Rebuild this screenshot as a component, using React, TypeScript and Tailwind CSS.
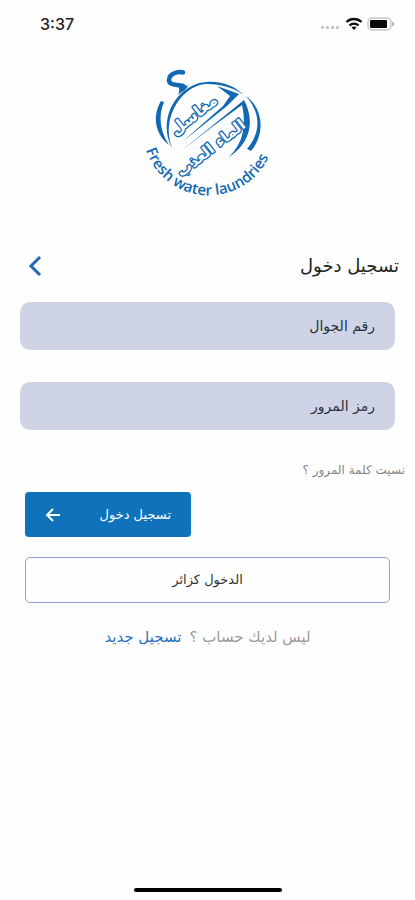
import React from "react";

function Logo() {
  return (
    <svg viewBox="130 60 155 140" className="h-[140px] w-[155px]" role="img" aria-label="Fresh water laundries">
      <defs>
        <path id="motto" d="M146 150 A66 66 0 0 0 274 139" />
      </defs>
      <path
        d="M183 72.500 C177 71 169 74 169 80 C169 86 177 84 183 86"
        fill="none"
        stroke="#1268b3"
        strokeLinecap="round"
        strokeWidth="4.500"
      />
      <g fill="#1268b3">
        <path d="M176 83 L188 86 C187 89 183 91 178 95 C180 91 180 87 176 83 Z" />
        <path d="M244 95 C234 86 222 81 207 82 C180 83 156 116 172 148 C160 116 184 84 207 84 C222 84 234 88 244 95 Z" />
        <path d="M161 101 L164 102 C158 116 160 131 169 145 C155 134 152 116 161 101 Z" />
        <path d="M246 96 C264 109 265 135 251 151 L247 149 C262 131 260 112 246 96 Z" />
        <path d="M217 86 L239 94 L227 106 L182 142 L223 106 L230 96 Z" />
        <path d="M180 152 L244 100 C256 123 249 144 229 157 C242 144 247 128 242 105 L212 127 Z" />
      </g>
      <g
        className="font-['DejaVu_Sans',sans-serif] font-bold"
        fill="#fff"
        stroke="#1268b3"
        strokeWidth="2.6"
        strokeLinejoin="round"
        paintOrder="stroke"
        textAnchor="middle"
        direction="rtl"
      >
        <text transform="translate(197 119) rotate(-38)" fontSize="16">مغاسل</text>
        <text transform="translate(214 152) rotate(-38)" fontSize="15">الماء العذب</text>
      </g>
      <text className="font-['Open_Sans',sans-serif] font-semibold" fill="#1268b3" fontSize="15">
        <textPath href="#motto">Fresh water laundries</textPath>
      </text>
    </svg>
  );
}

function StatusBar() {
  return (
    <header className="flex h-12 items-center justify-between pr-5 pl-10 font-['Inter',sans-serif]">
      <span className="text-base font-medium text-[#222]">3:37</span>
      <div className="flex items-center gap-1">
        <svg viewBox="0 0 20 4" className="mt-2 h-1 w-5" fill="#c4c4c4" aria-hidden="true">
          <rect x="0" y="0" width="3" height="3" rx="1" />
          <rect x="5" y="0" width="3" height="3" rx="1" />
          <rect x="10" y="0" width="3" height="3" rx="1" />
          <rect x="15" y="0" width="3" height="3" rx="1" />
        </svg>
        <svg viewBox="0 0 18 14" className="h-[14px] w-[18px]" fill="none" stroke="#111" strokeWidth="2.4" aria-hidden="true">
          <path d="M1.500 5 C5.500 1 12.500 1 16.500 5" />
          <path d="M4.500 8.500 C7 6 11 6 13.500 8.500" />
          <path d="M6.500 10.500 C8 9.300 10 9.300 11.500 10.500 L9 13 Z" fill="#111" stroke="none" />
        </svg>
        <svg viewBox="0 0 28 14" className="h-[14px] w-7" aria-hidden="true">
          <rect x="1" y="1" width="23" height="12" rx="4" fill="#fff" stroke="#c8c8c8" strokeWidth="1.500" />
          <rect x="3" y="3" width="17" height="8" rx="1" fill="#080808" />
          <path d="M25 4.500 L28 7 L25 9.500 Z" fill="#b5b5b5" />
        </svg>
      </div>
    </header>
  );
}

function Field({ id, label, type }: { id: string; label: string; type: string }) {
  return (
    <input
      id={id}
      type={type}
      dir="rtl"
      aria-label={label}
      placeholder={label}
      className="block h-12 w-full rounded-[10px] bg-[#ced4e5] px-5 text-right text-sm text-[#2c303b] outline-none placeholder:text-[#2c303b] placeholder:opacity-100"
    />
  );
}

export default function App() {
  return (
    <div dir="ltr" className="flex min-h-screen flex-col bg-[#fefefe] font-['DejaVu_Sans',sans-serif]">
      <StatusBar />
      <main className="flex flex-1 flex-col">
        <div className="mt-3 flex justify-center">
          <Logo />
        </div>
        <div className="mt-12 flex h-9 items-center justify-between pr-4 pl-6">
          <button type="button" aria-label="رجوع" className="p-1">
            <svg viewBox="0 0 14 22" className="h-[22px] w-[14px]" fill="none" stroke="#2169b4" strokeWidth="3" aria-hidden="true">
              <path d="M12 2 L3 11 L12 20" />
            </svg>
          </button>
          <h1 dir="rtl" className="text-lg text-[#222]">تسجيل دخول</h1>
        </div>
        <form className="flex flex-col" onSubmit={(e) => e.preventDefault()}>
          <div className="mt-[18px] flex flex-col gap-8 px-5">
            <Field id="phone" label="رقم الجوال" type="tel" />
            <Field id="password" label="رمز المرور" type="password" />
          </div>
          <a href="#forgot" dir="rtl" className="mt-8 mr-[10px] self-end text-xs leading-4 text-[#858585]">
            نسيت كلمة المرور ؟
          </a>
          <div className="mt-[14px] flex flex-col gap-5 px-[25px]">
            <button type="submit" className="flex h-[45px] w-[166px] items-center justify-between rounded-sm bg-[#1072bb] px-5 text-[13px] text-white">
              <svg viewBox="0 0 16 14" className="h-[14px] w-4" fill="none" stroke="#fff" strokeWidth="2" aria-hidden="true">
                <path d="M15 7 H2 M8 1 L2 7 L8 13" />
              </svg>
              <span dir="rtl">تسجيل دخول</span>
            </button>
            <button type="button" dir="rtl" className="h-[46px] w-full rounded-[5px] border border-[#8fa3cf] text-[13px] text-[#333]">
              الدخول كزائر
            </button>
          </div>
        </form>
        <p dir="rtl" className="mt-6 flex justify-center gap-2 text-[15px] leading-5 text-[#999]">
          <span>ليس لديك حساب ؟</span>
          <a href="#register" className="text-[#2872bd]">تسجيل جديد</a>
        </p>
      </main>
      <div className="mx-auto mb-2 h-1 w-[148px] rounded-full bg-black" />
    </div>
  );
}
